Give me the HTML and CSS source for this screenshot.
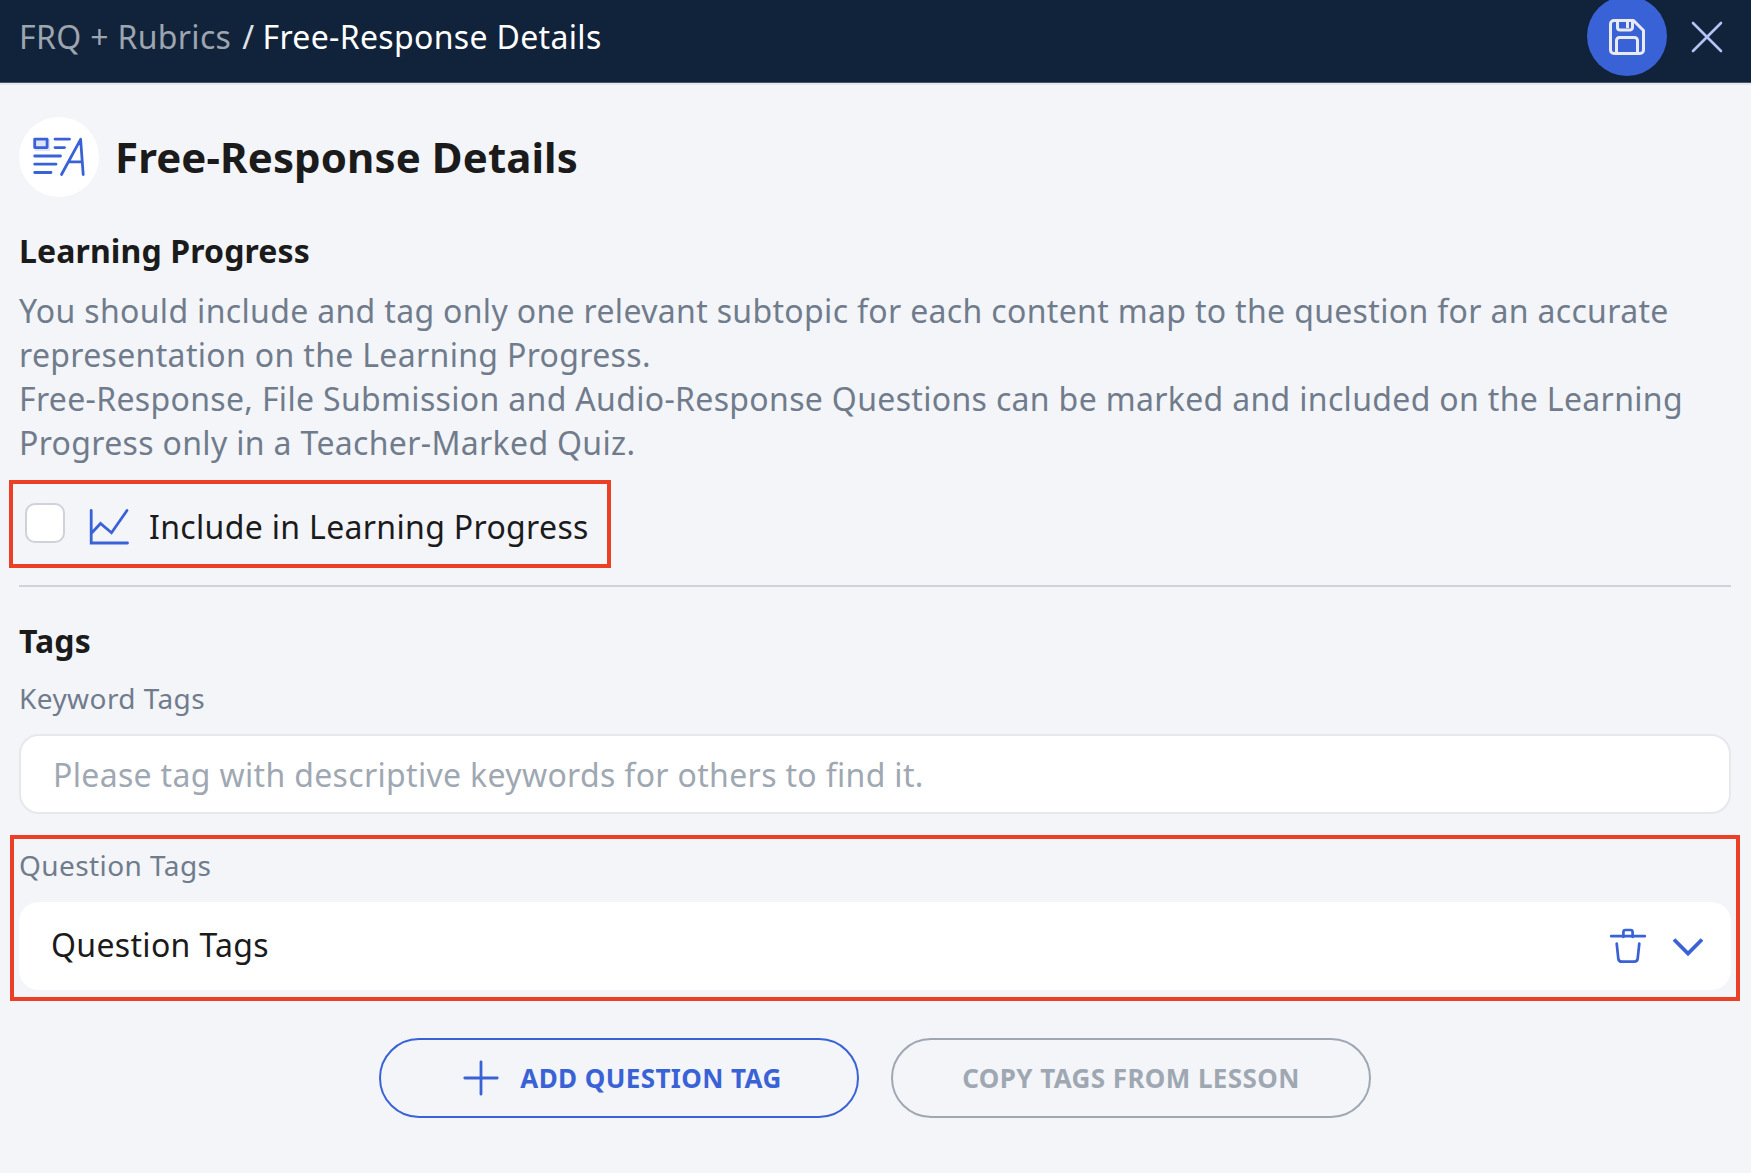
FILE: index.html
```html
<!DOCTYPE html>
<html lang="en">
<head>
<meta charset="utf-8">
<title>Free-Response Details</title>
<link rel="stylesheet" href="styles.css">
</head>
<body>
<header class="topbar">
  <nav class="crumbs"><a class="crumb-parent">FRQ + Rubrics</a><span class="crumb-sep">/</span><span>Free-Response Details</span></nav>
  <button class="save" aria-label="Save">
    <svg width="36" height="36" viewBox="0 0 36 36" fill="none" stroke="#e8eaf0" stroke-width="3" stroke-linejoin="round"><path d="M5 1.5H24.5L34.5 11.5V31a3.5 3.5 0 0 1-3.5 3.5H5A3.500 3.500 0 0 1 1.500 31V5A3.500 3.500 0 0 1 5 1.500Z"/><path d="M7.500 34V21.500a3 3 0 0 1 3-3h15a3 3 0 0 1 3 3V34"/><path d="M8.500 1V8.500a2.500 2.500 0 0 0 2.500 2.500h10a2.500 2.500 0 0 0 2.500-2.500V1M18.500 1V9"/></svg>
  </button>
  <button class="close" aria-label="Close">
    <svg width="32" height="32" viewBox="0 0 32 32" fill="none" stroke="#b3c3f3" stroke-width="2.600" stroke-linecap="round"><path d="M2 2 30 30M30 2 2 30"/></svg>
  </button>
</header>
<main class="page">
  <div class="title-row">
    <span class="badge">
      <svg width="54" height="40" viewBox="0 0 54 40" fill="none" stroke="#3a62d7" stroke-width="2.800" stroke-linecap="round" stroke-linejoin="round"><path d="M3 2h15v12H3z" fill="#dfe6fb" stroke="none"/><path d="M2.700 2.200h12.400v8.400H2.700z"/><path d="M23 2.200h14.500M23 10.600h9.500M2.700 19H28.500M2.700 27.200H24M2.700 35.500H19M29.500 37.500 48.600 2.300 51.200 37.500M37 24.800H50"/></svg>
    </span>
    <h1 class="title">Free-Response Details</h1>
  </div>
  <section class="progress">
    <h2 class="heading">Learning Progress</h2>
    <p class="copy">You should include and tag only one relevant subtopic for each content map to the question for an accurate<br>representation on the Learning Progress.<br>Free-Response, File Submission and Audio-Response Questions can be marked and included on the Learning<br>Progress only in a Teacher-Marked Quiz.</p>
    <label class="include">
      <span class="checkbox"></span>
      <svg class="chart" width="40" height="38" viewBox="0 0 40 38" fill="none" stroke="#3a62d7" stroke-width="2.800" stroke-linecap="round"><path d="M2.200 2.500V35H38.500M2.200 25.500 11.500 15.500 22.500 24.800 38 2.500"/></svg>
      <span>Include in Learning Progress</span>
    </label>
  </section>
  <hr class="divider">
  <section class="tags">
    <h2 class="heading">Tags</h2>
    <div class="label">Keyword Tags</div>
    <div class="field">Please tag with descriptive keywords for others to find it.</div>
    <div class="question">
      <div class="label">Question Tags</div>
      <div class="card">
        <span class="card-text">Question Tags</span>
        <svg class="trash" width="38" height="38" viewBox="0 0 38 38" fill="none" stroke="#3a62d7" stroke-width="2.700" stroke-linecap="round" stroke-linejoin="round"><path d="M2.200 9.200H35.800M14.400 10V5a2 2 0 0 1 2-2h5.200a2 2 0 0 1 2 2V10M7.700 16.500 9.300 31.500a3.600 3.600 0 0 0 3.600 3.200H25.100a3.600 3.600 0 0 0 3.600-3.200L30.300 16.500"/></svg>
        <svg class="chevron" width="32" height="20" viewBox="0 0 32 20" fill="none" stroke="#3a62d7" stroke-width="3.800"><path d="M2 2.500 16 16.500 30 2.500"/></svg>
      </div>
    </div>
  </section>
  <div class="actions">
    <button class="btn btn-add">
      <svg width="36" height="36" viewBox="0 0 36 36" fill="none" stroke="#3a62d7" stroke-width="2.800" stroke-linecap="round"><path d="M18 1.800V34.200M1.800 18H34.200"/></svg>
      <span>ADD QUESTION TAG</span>
    </button>
    <button class="btn btn-copy">COPY TAGS FROM LESSON</button>
  </div>
</main>
</body>
</html>
```
FILE: styles.css
```css
* { box-sizing: border-box; }
body {
  margin: 0;
  height: 1173px;
  overflow: hidden;
  background: #f3f5f9;
  color: #1b1b1b;
  font: 32px/44px "Noto Sans", sans-serif;
  letter-spacing: 0.33px;
}
h1, h2, p { margin: 0; }
svg { display: block; flex: none; }
button { font: inherit; letter-spacing: inherit; color: inherit; background: none; border: 0; padding: 0; }

.topbar {
  display: flex;
  align-items: center;
  height: 85px;
  padding: 0 28px 11px 19px;
  background: #11223b;
  border-bottom: 2px solid #e6e8ee;
  box-shadow: inset 0 -1px #47546b;
  color: #fff;
}
.crumbs { display: flex; flex: 1; padding-top: 2px; }
.crumb-parent { color: #9da5ae; }
.crumb-sep { margin: 0 8px 0 11px; color: #dfe2e6; }
.save {
  display: grid;
  place-items: center;
  width: 80px;
  height: 80px;
  padding-top: 2px;
  border-radius: 50%;
  background: #3a62d7;
}
.close { margin: 2px 0 0 24px; }

.page { padding: 32px 20px 0 19px; }
.title-row { display: flex; align-items: center; gap: 16px; }
.badge {
  display: grid;
  place-items: center;
  width: 80px;
  height: 80px;
  border-radius: 50%;
  background: #fff;
}
.title { font-size: 42px; line-height: 56px; letter-spacing: 0.1px; }
.progress { margin-top: 32px; }
.heading { font-size: 32px; line-height: 44px; font-weight: 700; letter-spacing: 0.12px; }
.copy { margin-top: 16px; color: #707c8c; white-space: nowrap; }
.include {
  display: flex;
  align-items: center;
  width: 602px;
  height: 88px;
  margin: 15px 0 0 -10px;
  padding: 0 0 2px 12px;
  border: 4px solid #eb4025;
}
.checkbox {
  width: 40px;
  height: 40px;
  border: 2px solid #cfd2d8;
  border-radius: 10px;
  background: #fff;
}
.chart { margin: 8px 20px 0 24px; }
.include > span:last-child { margin-top: 8px; }
.divider { height: 2px; margin: 17px 0 0; border: 0; background: #cfd2d8; }
.tags { margin-top: 32px; }
.label { font-size: 28px; line-height: 38px; color: #707c8c; letter-spacing: 0.42px; }
.tags > .label { margin-top: 16px; }
.field {
  height: 80px;
  margin-top: 17px;
  padding: 17px 32px 15px;
  border: 2px solid #e6e8ec;
  border-radius: 20px;
  background: #fff;
  color: #9fa8b2;
}
.question {
  height: 166px;
  margin: 21px -9px 0;
  padding: 7px 5px 7px;
  border: 4px solid #eb4025;
}
.card {
  display: flex;
  align-items: center;
  height: 88px;
  margin-top: 18px;
  padding: 0 27px 0 32px;
  border-radius: 20px;
  background: #fff;
}
.card-text { flex: 1; margin-top: -2px; }
.trash { margin-right: 25px; }
.chevron { margin-top: 2px; }
.actions { display: flex; justify-content: center; gap: 32px; margin-top: 37px; }
.btn {
  display: flex;
  align-items: center;
  justify-content: center;
  width: 480px;
  height: 80px;
  border: 2px solid;
  border-radius: 40px;
  font-size: 26px;
  font-weight: 700;
  letter-spacing: 0.4px;
}
.btn-add { gap: 21px; padding-left: 7px; color: #3a62d7; }
.btn-copy { color: #9fa8b2; }
```
